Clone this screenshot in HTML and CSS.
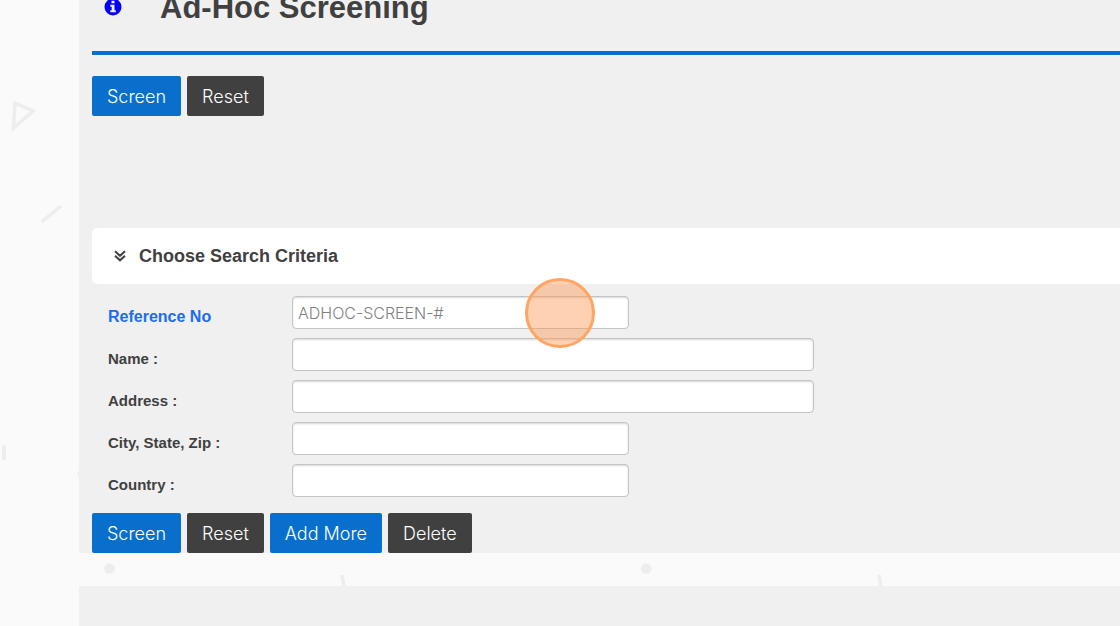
FILE: index.html
```html
<!DOCTYPE html>
<html lang="en">
<head>
<meta charset="utf-8">
<meta name="viewport" content="width=device-width, initial-scale=1">
<title>Ad-Hoc Screening</title>
<link rel="stylesheet" href="styles.css">
</head>
<body>
<svg class="backdrop" width="1120" height="626" viewBox="0 0 1120 626" fill="none" stroke="#ededed" aria-hidden="true">
  <path d="M15 103 L33 111 L13.500 128 Z" stroke-width="3.500"/>
  <path d="M41.500 222 L61 206" stroke-width="3.500"/>
  <path d="M4 445.500 V460" stroke-width="4"/>
  <circle cx="83" cy="474" r="5.500" fill="#ededed" stroke="none"/>
  <circle cx="109.500" cy="568.500" r="5.300" fill="#ededed" stroke="none"/>
  <circle cx="646.300" cy="568.500" r="5.300" fill="#ededed" stroke="none"/>
  <path d="M342 575 L344.500 590 M879 575 L881.500 590" stroke-width="3.500"/>
</svg>
<main class="panel">
  <header class="page-head">
    <svg class="info" width="18" height="18" viewBox="0 0 18 18" aria-hidden="true">
      <circle cx="9" cy="9" r="8.500" fill="#0000fa"/>
      <path d="M7.500 2.700h3v2.600h-3zM6.300 6.700h4.200v5.600h1.300v2H6.300v-2h1.400V8.700H6.300z" fill="#f0f0f0"/>
    </svg>
    <h1 class="title">Ad-Hoc Screening</h1>
  </header>
  <div class="toolbar">
    <button class="btn btn-primary" type="button">Screen</button>
    <button class="btn" type="button">Reset</button>
  </div>
  <section class="criteria">
    <h2 class="criteria-head">
      <svg width="12" height="12" viewBox="0 0 12 12" fill="none" stroke="#404040" stroke-width="2" aria-hidden="true">
        <path d="M1 1.300 L6 5.800 L11 1.300 M1 5.800 L6 10.300 L11 5.800"/>
      </svg>
      Choose Search Criteria
    </h2>
    <form class="fields">
      <label class="label label-link" for="ref">Reference No</label>
      <div class="field"><input class="input" id="ref" type="text" placeholder="ADHOC-SCREEN-#"><span class="marker"></span></div>
      <label class="label" for="name">Name :</label>
      <div class="field field-wide"><input class="input" id="name" type="text"></div>
      <label class="label" for="address">Address :</label>
      <div class="field field-wide"><input class="input" id="address" type="text"></div>
      <label class="label" for="city">City, State, Zip :</label>
      <div class="field"><input class="input" id="city" type="text"></div>
      <label class="label" for="country">Country :</label>
      <div class="field"><input class="input" id="country" type="text"></div>
    </form>
  </section>
  <div class="actions">
    <button class="btn btn-primary" type="button">Screen</button>
    <button class="btn" type="button">Reset</button>
    <button class="btn btn-primary" type="button">Add More</button>
    <button class="btn" type="button">Delete</button>
  </div>
</main>
<footer class="foot"></footer>
</body>
</html>
```

FILE: styles.css
```css
* {
  box-sizing: border-box;
}

body {
  margin: 0;
  min-height: 100vh;
  padding-left: 79px;
  display: flex;
  flex-direction: column;
  gap: 33px;
  overflow: hidden;
  background: #fafafa;
  color: #404040;
  font-family: "Liberation Sans", Arial, sans-serif;
}

.backdrop {
  position: absolute;
  top: 0;
  left: 0;
  z-index: -1;
}

.panel {
  padding-left: 13px;
  background: #f0f0f0;
}

.page-head {
  display: flex;
  gap: 38px;
  padding: 0 0 35px 12px;
  border-bottom: 4px solid #0870cc;
}

.info {
  margin-top: -2px;
}

.title {
  margin: 0;
  font-size: 31px;
  line-height: 16px;
}

.toolbar,
.actions {
  display: flex;
  gap: 6px;
}

.toolbar {
  padding: 21px 0 112px;
}

.btn {
  padding: 2px 15px 0;
  border: 0;
  border-radius: 2px;
  background: #404040;
  color: #fff;
  font-family: Inter, "Liberation Sans", sans-serif;
  font-size: 18px;
  font-weight: 300;
  line-height: 38px;
}

.btn-primary {
  background: #0870cc;
}

.criteria-head {
  display: flex;
  align-items: center;
  gap: 13px;
  margin: 0;
  padding: 0 22px;
  border-radius: 5px 0 0 5px;
  background: #fff;
  font-size: 18px;
  line-height: 56px;
}

.fields {
  display: grid;
  grid-template-columns: 184px minmax(0, 1fr);
  row-gap: 9px;
  padding: 12px 16px 16px;
}

.label {
  padding-top: 9px;
  font-size: 15px;
  font-weight: 700;
  line-height: 23px;
}

.label-link {
  color: #1a6cf0;
  font-size: 16px;
}

.field {
  position: relative;
  max-width: 337px;
}

.field-wide {
  max-width: 522px;
}

.input {
  display: block;
  width: 100%;
  height: 33px;
  padding: 0 5px;
  border: 1px solid #c4c4c4;
  border-radius: 4px;
  background: #fff;
  box-shadow: inset 0 1px 2px #d8d8d8;
  font-family: Inter, "Liberation Sans", sans-serif;
  font-size: 16px;
  font-weight: 300;
}

.input::placeholder {
  color: #808080;
  opacity: 1;
}

.marker {
  position: absolute;
  top: -18px;
  right: 34px;
  z-index: 1;
  width: 70px;
  height: 70px;
  border: 3px solid #ffa561;
  border-radius: 50%;
  background: rgba(250, 145, 70, 0.42);
}

.foot {
  flex: 1;
  background: #f0f0f0;
}
```
